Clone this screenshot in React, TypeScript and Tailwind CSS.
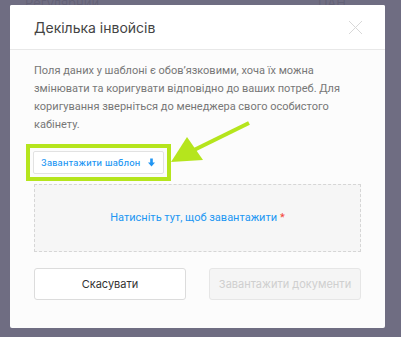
import React from "react";

function CloseIcon() {
  return (
    <svg width="15" height="15" viewBox="0 0 15 15" fill="none">
      <path d="M1 1L14 14M14 1L1 14" stroke="#d8d8d8" strokeWidth="1" />
    </svg>
  );
}

function Pointer() {
  return (
    <svg
      className="pointer-events-none absolute left-0 top-0"
      width="401"
      height="337"
      viewBox="0 0 401 337"
    >
      <line x1="249" y1="123" x2="192" y2="151" stroke="#b5e51d" strokeWidth="4" />
      <polygon points="187,137 171,162 203,160" fill="#b5e51d" />
    </svg>
  );
}

const roboto = { fontFamily: "Roboto, 'Noto Sans', sans-serif" };

export default function App() {
  return (
    <div
      className="relative h-[337px] w-[401px] overflow-hidden bg-white"
      style={{ fontFamily: "Inter, 'Noto Sans', sans-serif" }}
    >
      {/* page behind the overlay */}
      <div className="flex h-[20px] items-start justify-between px-[25px] text-[13px] leading-[6px] text-[#222]">
        <span>Регулярний</span>
        <span className="pr-[30px]">UAH</span>
      </div>

      <div className="absolute inset-0 bg-[#67657b]/95">
        <div className="ml-[10px] mt-[5px] flex h-[323px] w-[375px] flex-col overflow-hidden rounded-[2px] bg-[#fcfcfc]">
          <div className="flex h-[45px] shrink-0 items-center justify-between border-b border-[#e8e8e8] bg-white pl-[24px] pr-[22px]">
            <span className="text-[14px] text-[#444]">Декілька інвойсів</span>
            <CloseIcon />
          </div>

          <div className="flex flex-col px-[24px] pt-[12px]">
            <p className="text-[11px] leading-[18px] text-[#777]" style={roboto}>
              Поля даних у шаблоні є обов’язковими, хоча їх можна змінювати та
              коригувати відповідно до ваших потреб. Для коригування зверніться
              до менеджера свого особистого кабінету.
            </p>

            <div className="ml-[-8px] mt-[10px] w-fit border-[4px] border-[#b5e51d] p-[3px]">
              <button className="flex h-[23px] items-center gap-[7px] rounded-[2px] border border-[#e2e2e2] bg-white pl-[7px] pr-[8px] text-[9px] font-medium tracking-[0.25px] text-[#2196f3]">
                Завантажити шаблон
                <svg width="7" height="9" viewBox="0 0 8 9">
                  <path d="M2.5 0H5.5V4.5H8L4 9L0 4.5H2.5Z" fill="#2196f3" />
                </svg>
              </button>
            </div>

            <div
              className="mt-[3px] flex h-[68px] items-center justify-center border border-dashed border-[#d6d6d6] bg-[#f6f6f6] text-[11px] text-[#2196f3]"
              style={roboto}
            >
              Натисніть тут, щоб завантажити
              <span className="ml-[3px] text-[#f44336]">*</span>
            </div>

            <div className="mt-[16px] flex gap-[23px]">
              <button className="h-[32px] flex-1 rounded-[3px] border border-[#dcdcdc] bg-white text-[11px] text-[#333]">
                Скасувати
              </button>
              <button className="h-[32px] flex-1 rounded-[3px] border border-[#e6e6e6] bg-[#f5f5f5] text-[11px] text-[#cfcfcf]">
                Завантажити документи
              </button>
            </div>
          </div>
        </div>
      </div>

      <Pointer />
    </div>
  );
}
